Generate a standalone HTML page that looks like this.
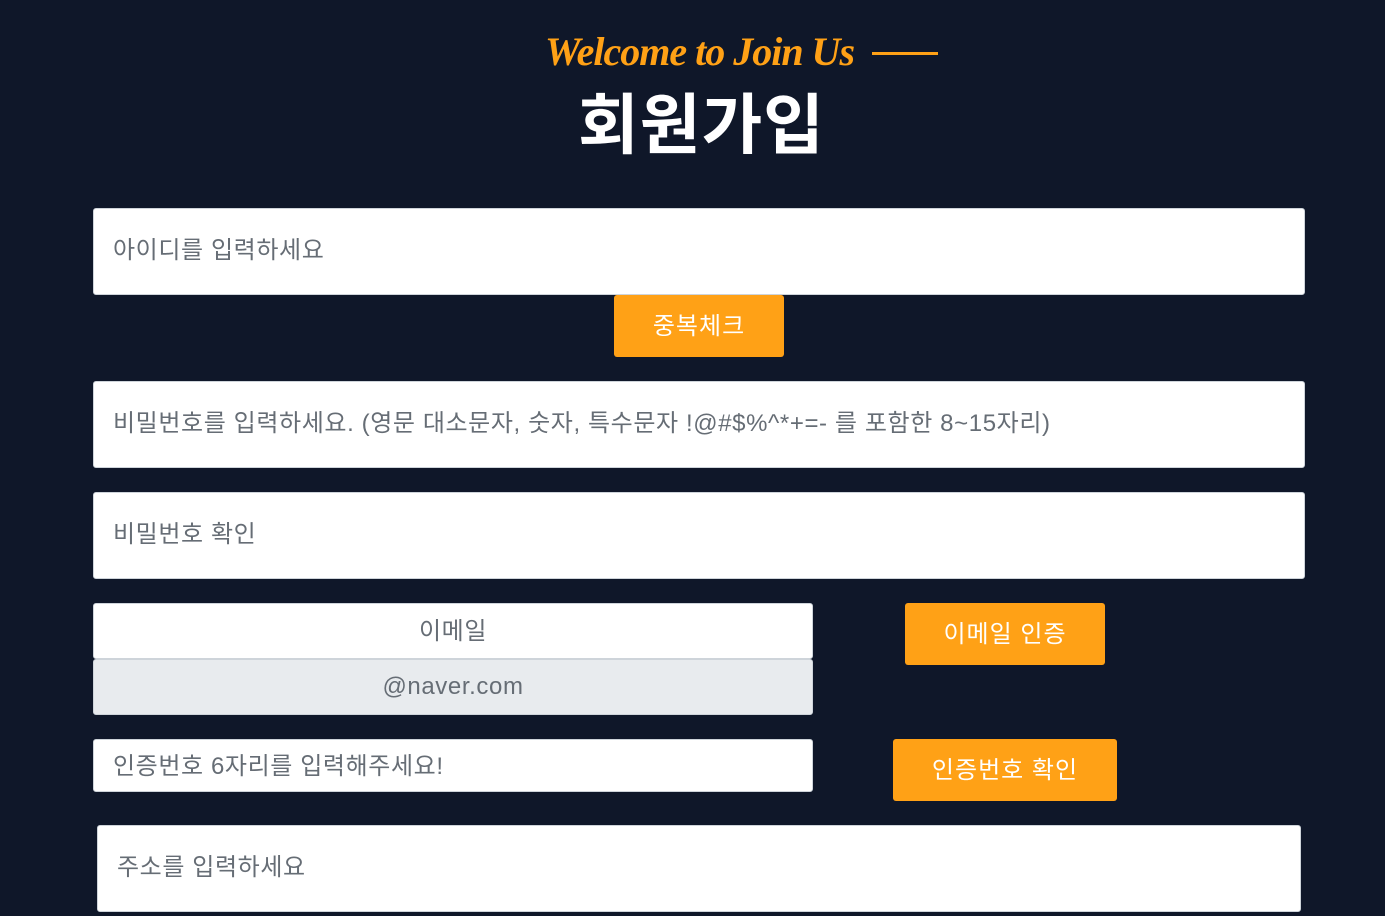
<!DOCTYPE html>
<html><head><meta charset="utf-8"><style>
*{box-sizing:border-box;margin:0;padding:0}
body{width:1385px;height:916px;background:#0f1729;font-family:"Liberation Sans","Noto Sans CJK KR",sans-serif;position:relative;overflow:hidden}
.a{position:absolute}
.in{position:absolute;background:#fff;border:1px solid #ced4da;border-radius:3px;color:#666d75;font-size:24px;padding-left:19px;display:flex;align-items:center;letter-spacing:0.6px}
.btn{position:absolute;background:#ffa116;border-radius:3px;color:#fff;font-size:24px;display:flex;align-items:center;justify-content:center;padding-bottom:6px;letter-spacing:1px}
</style></head><body>
<div class="a" style="left:545px;top:28px;font-family:'Liberation Serif',serif;font-style:italic;font-weight:bold;font-size:40px;color:#ffa116;letter-spacing:-1px">Welcome to Join Us</div>
<div class="a" style="left:872px;top:52px;width:66px;height:3px;background:#ffa116"></div>
<div class="a" style="left:578px;top:72px;font-size:66px;font-weight:bold;color:#fff;font-family:'Noto Sans CJK KR',sans-serif;letter-spacing:1px">회원가입</div>
<div class="in" style="left:93px;top:208px;width:1212px;height:87px;padding-bottom:8px">아이디를 입력하세요</div>
<div class="btn" style="left:614px;top:295px;width:170px;height:62px">중복체크</div>
<div class="in" style="left:93px;top:381px;width:1212px;height:87px;padding-bottom:8px">비밀번호를 입력하세요. (영문 대소문자, 숫자, 특수문자 !@#$%^*+=- 를 포함한 8~15자리)</div>
<div class="in" style="left:93px;top:492px;width:1212px;height:87px;padding-bottom:8px">비밀번호 확인</div>
<div class="in" style="left:93px;top:603px;width:720px;height:56px;justify-content:center;padding:0 0 5px 0">이메일</div>
<div class="in" style="left:93px;top:659px;width:720px;height:56px;justify-content:center;background:#e8ebee;padding:0">@naver.com</div>
<div class="btn" style="left:905px;top:603px;width:200px;height:62px">이메일 인증</div>
<div class="in" style="left:93px;top:739px;width:720px;height:53px;padding-bottom:5px">인증번호 6자리를 입력해주세요!</div>
<div class="btn" style="left:893px;top:739px;width:224px;height:62px">인증번호 확인</div>
<div class="in" style="left:97px;top:825px;width:1204px;height:87px;padding-bottom:8px">주소를 입력하세요</div>
</body></html>
